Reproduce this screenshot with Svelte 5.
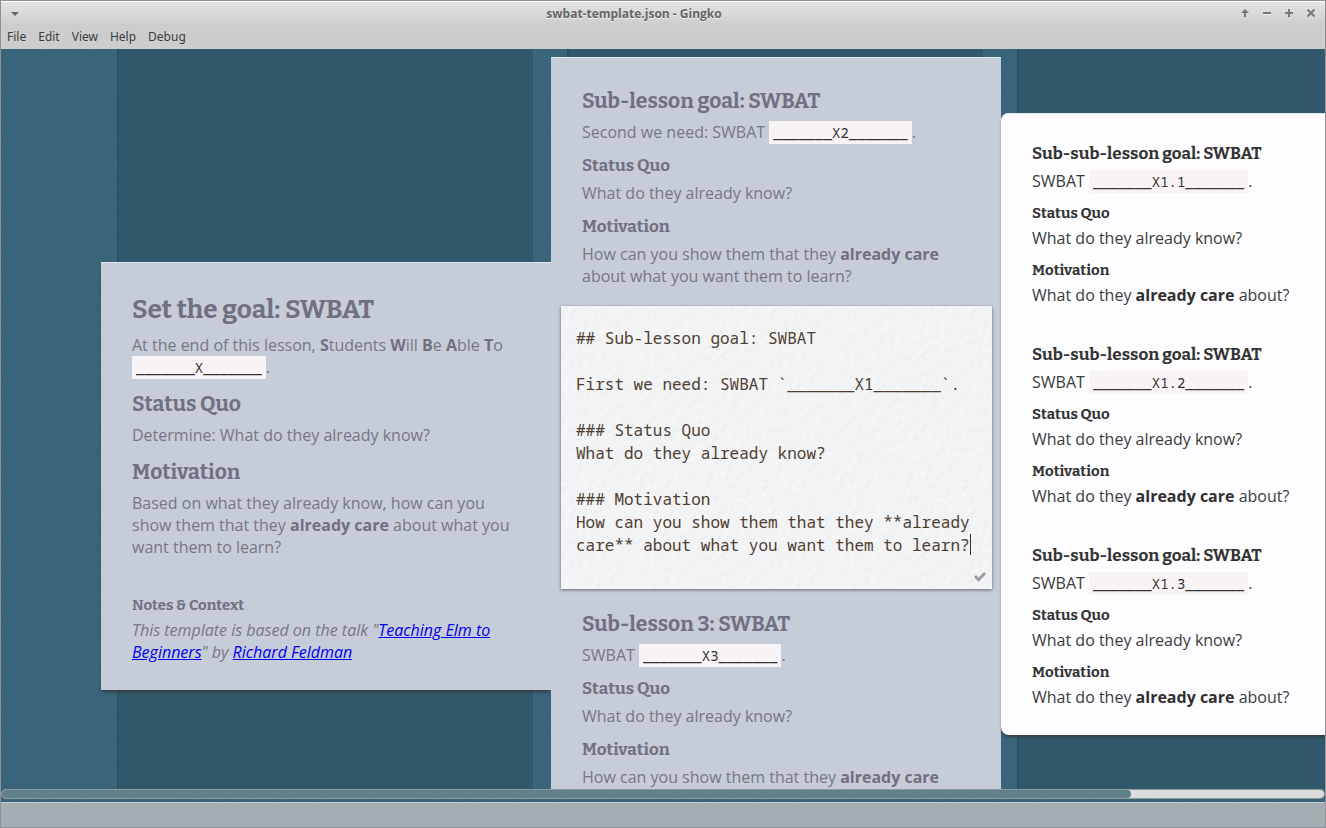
<script>
  const menus = ['File', 'Edit', 'View', 'Help', 'Debug'];
  const subSubLessons = ['_______X1.1_______', '_______X1.2_______', '_______X1.3_______'];
  let draft = $state(
    '## Sub-lesson goal: SWBAT\n\nFirst we need: SWBAT `_______X1_______`.\n\n### Status Quo\nWhat do they already know?\n\n### Motivation\nHow can you show them that they **already care** about what you want them to learn?'
  );
</script>

<div class="window">
  <header class="titlebar">
    <button class="wm menu" aria-label="Window menu">
      <svg width="10" height="10" viewBox="0 0 10 10"><path d="M1 3h8L5 7z" fill="#666" /></svg>
    </button>
    <h1 class="title">swbat-template.json - Gingko</h1>
    <div class="controls">
      <button class="wm" aria-label="Shade">
        <svg width="10" height="11" viewBox="0 0 10 11"><path d="M5 1 1 5h3v4h2V5h3z" fill="#777" /></svg>
      </button>
      <button class="wm" aria-label="Minimize">
        <svg width="10" height="11" viewBox="0 0 10 11"><path d="M1 4h8v2H1z" fill="#777" /><path d="M1 6h8v1H1z" fill="#eee" /></svg>
      </button>
      <button class="wm" aria-label="Maximize">
        <svg width="10" height="11" viewBox="0 0 10 11"><path d="M4 1h2v3h3v2H6v3H4V6H1V4h3z" fill="#777" /></svg>
      </button>
      <button class="wm" aria-label="Close">
        <svg width="10" height="11" viewBox="0 0 10 11"><path d="m1.500 1.500 7 7m0-7-7 7" stroke="#777" stroke-width="2" /></svg>
      </button>
    </div>
  </header>

  <nav class="menubar">
    {#each menus as menu}
      <button>{menu}</button>
    {/each}
  </nav>

  <main class="desk">
    <div class="board">
      <section class="column first">
        <div class="group ancestor">
          <article>
            <h2 class="xl">Set the goal: SWBAT</h2>
            <p>
              At the end of this lesson, <b>S</b>tudents <b>W</b>ill <b>B</b>e <b>A</b>ble <b>T</b>o
              <code>_______X_______</code>.
            </p>
            <h3 class="lg">Status Quo</h3>
            <p>Determine: What do they already know?</p>
            <h3 class="lg">Motivation</h3>
            <p>
              Based on what they already know, how can you show them that they <b>already care</b> about
              what you want them to learn?
            </p>
          </article>
          <article class="next">
            <h4 class="sm">Notes &amp; Context</h4>
            <p>
              <i>This template is based on the talk "<a href="#talk">Teaching Elm to Beginners</a>" by
                <a href="#speaker">Richard Feldman</a></i>
            </p>
          </article>
        </div>
      </section>

      <section class="column second">
        <div class="group ancestor">
          <article>
            <h2 class="lg">Sub-lesson goal: SWBAT</h2>
            <p>Second we need: SWBAT <code>_______X2_______</code>.</p>
            <h3 class="md">Status Quo</h3>
            <p>What do they already know?</p>
            <h3 class="md">Motivation</h3>
            <p>How can you show them that they <b>already care</b> about what you want them to learn?</p>
          </article>
          <form class="editor">
            <textarea aria-label="Card text" rows="10" spellcheck="false" bind:value={draft}></textarea>
            <span class="caret"></span>
            <button type="button" class="save" aria-label="Save card">
              <svg width="14" height="12" viewBox="0 0 14 12"><path d="m1 6 2-2 2.500 2.500L11 1l2 2-7.500 8z" fill="#999da0" /></svg>
            </button>
          </form>
          <article>
            <h2 class="lg">Sub-lesson 3: SWBAT</h2>
            <p>SWBAT <code>_______X3_______</code>.</p>
            <h3 class="md">Status Quo</h3>
            <p>What do they already know?</p>
            <h3 class="md">Motivation</h3>
            <p>How can you show them that they <b>already care</b> about what you want them to learn?</p>
          </article>
        </div>
      </section>

      <section class="column third">
        <div class="group active">
          {#each subSubLessons as blank}
            <article>
              <h3 class="md">Sub-sub-lesson goal: SWBAT</h3>
              <p>SWBAT <code>{blank}</code>.</p>
              <h4 class="sm">Status Quo</h4>
              <p>What do they already know?</p>
              <h4 class="sm">Motivation</h4>
              <p>What do they <b>already care</b> about?</p>
            </article>
          {/each}
        </div>
      </section>
    </div>
    <div class="scrollbar"><div class="thumb"></div></div>
  </main>

  <footer class="statusbar"></footer>
</div>

<style>
  :global(body) {
    margin: 0;
  }

  .window {
    box-sizing: border-box;
    height: 100vh;
    display: flex;
    flex-direction: column;
    border: 1px solid #919191;
    background: #cdcdcd;
    font-family: 'Open Sans', 'Noto Sans', sans-serif;
  }

  button {
    border: 0;
    padding: 0;
    margin: 0;
    background: none;
    font: inherit;
    color: inherit;
  }

  .titlebar {
    flex: none;
    display: flex;
    align-items: center;
    height: 23px;
    padding: 0 9px;
    border-top: 1px solid #fff;
    background: linear-gradient(#e4e4e4, #cdcdcd);
  }

  .title {
    flex: 1;
    margin: 0;
    text-align: center;
    font: bold 12px/22px 'Open Sans', sans-serif;
    color: #666;
    text-shadow: 0 1px #eee;
  }

  .menu {
    margin-right: 8px;
  }

  .controls {
    display: flex;
    gap: 12px;
  }

  .wm svg {
    display: block;
  }

  .menubar {
    flex: none;
    display: flex;
    align-items: flex-start;
    gap: 12px;
    height: 24px;
    padding: 0 6px;
    font: 12px/24px 'Noto Sans', sans-serif;
    color: #3c3c3c;
  }

  .desk {
    flex: 1;
    min-height: 0;
    display: flex;
    flex-direction: column;
    padding-bottom: 3px;
    background-color: #386277;
    background-image: url("data:image/svg+xml,%3Csvg xmlns='http://www.w3.org/2000/svg' width='240' height='240'%3E%3Cfilter id='n'%3E%3CfeTurbulence type='fractalNoise' baseFrequency='.6' numOctaves='3' stitchTiles='stitch'/%3E%3CfeColorMatrix values='0 0 0 0 .1 0 0 0 0 .25 0 0 0 0 .33 .8 0 0 0 -.3'/%3E%3C/filter%3E%3Crect width='240' height='240' filter='url(%23n)' opacity='.5'/%3E%3C/svg%3E");
  }

  .board {
    flex: 1;
    min-height: 0;
    overflow: hidden;
    display: flex;
    padding-left: 100px;
  }

  .column {
    flex: none;
    width: 450px;
    background: linear-gradient(
      90deg,
      transparent 16px,
      #2c5064 16px 18px,
      #32586b 18px 432px,
      #3d657b 432px 434px,
      transparent 434px
    );
  }

  .first {
    padding-top: 213px;
  }

  .second {
    padding-top: 8px;
  }

  .third {
    padding-top: 64px;
  }

  .group {
    padding-top: 21px;
    font-size: 16px;
    line-height: 22px;
  }

  .ancestor {
    background: #c6ccd8;
    color: #777785;
  }

  .ancestor .xl,
  .ancestor .lg,
  .ancestor .md,
  .ancestor .sm,
  .ancestor b {
    color: #717083;
  }

  .first .group {
    box-shadow:
      inset 0 1px #dfeaf5,
      0 3px 3px -1px #333c44;
  }

  .second .group {
    box-shadow: inset 0 1px #dfeaf5;
  }

  .active {
    padding-top: 19px;
    border-radius: 8px 0 0 8px;
    background: #fdfdff;
    color: #3b3b3b;
    box-shadow:
      inset 0 1px #dfeaf5,
      0 3px 3px -1px #333c44;
  }

  .active b {
    color: #303030;
  }

  article {
    padding: 9px 31px 27px;
  }

  .first article {
    padding-top: 11px;
  }

  .first article.next {
    padding-top: 10px;
  }

  .second article {
    padding-bottom: 19px;
  }

  .editor + article {
    padding-top: 21px;
  }

  h2,
  h3,
  h4,
  p {
    margin: 0;
  }

  h2,
  h3,
  h4 {
    font-family: Bitter, 'DejaVu Serif Condensed', 'DejaVu Serif', serif;
    font-weight: bold;
  }

  .xl {
    margin-bottom: 8px;
    font-size: 26px;
    line-height: 32px;
  }

  .lg {
    margin-bottom: 6px;
    font-size: 21px;
    line-height: 28px;
  }

  p + .lg {
    margin-top: 12px;
  }

  .md {
    margin-bottom: 3px;
    font-size: 17px;
    line-height: 26px;
  }

  p + .md {
    margin-top: 10px;
  }

  .sm {
    margin-bottom: 4px;
    font-size: 15px;
    line-height: 20px;
  }

  p + .sm {
    margin-top: 11px;
  }

  .active h3,
  .active h4 {
    color: #333;
  }

  code {
    padding: 2px 4px;
    background: #f8f3f5;
    color: #333;
    font: 14px/16px 'Noto Sans Mono', 'Droid Sans Mono', 'DejaVu Sans Mono', monospace;
  }

  a {
    color: #00e;
  }

  .editor {
    position: relative;
    margin: 0 9px 0 10px;
    padding: 21px 15px 32px;
    background-color: #f2f5f7;
    background-image: url("data:image/svg+xml,%3Csvg xmlns='http://www.w3.org/2000/svg' width='200' height='200'%3E%3Cfilter id='p' x='0' y='0' width='100%25' height='100%25' color-interpolation-filters='sRGB'%3E%3CfeTurbulence type='fractalNoise' baseFrequency='.16' numOctaves='4' stitchTiles='stitch'/%3E%3CfeDiffuseLighting lighting-color='%23fff' surfaceScale='1'%3E%3CfeDistantLight azimuth='225' elevation='65'/%3E%3C/feDiffuseLighting%3E%3C/filter%3E%3Crect width='200' height='200' filter='url(%23p)' opacity='.12'/%3E%3C/svg%3E");
    box-shadow: 0 1px 3px rgba(0, 0, 0, 0.5);
    font: 16px/23px 'Noto Sans Mono', 'Droid Sans Mono', 'DejaVu Sans Mono', monospace;
    color: #4f3d30;
  }

  textarea {
    display: block;
    box-sizing: border-box;
    width: 100%;
    height: 230px;
    margin: 0;
    padding: 0;
    border: 0;
    outline: 0;
    resize: none;
    overflow: hidden;
    background: none;
    font: inherit;
    color: inherit;
  }

  .caret {
    position: absolute;
    left: calc(15px + 41ch);
    bottom: 34px;
    width: 1px;
    height: 21px;
    background: #3a2c21;
  }

  .save {
    position: absolute;
    right: 5px;
    bottom: 6px;
  }

  .save svg {
    display: block;
  }

  .scrollbar {
    flex: none;
    box-sizing: border-box;
    height: 10px;
    border: 1px solid #8a9a9e;
    border-radius: 5px;
    background: #dcdcdc;
    overflow: hidden;
  }

  .thumb {
    box-sizing: border-box;
    width: 85.4%;
    height: 100%;
    border-radius: 0 4px 4px 0;
    background: #60818c;
  }

  .statusbar {
    flex: none;
    height: 24px;
    border-top: 1px solid #c4ced2;
    background: #a3adb2;
  }
</style>
